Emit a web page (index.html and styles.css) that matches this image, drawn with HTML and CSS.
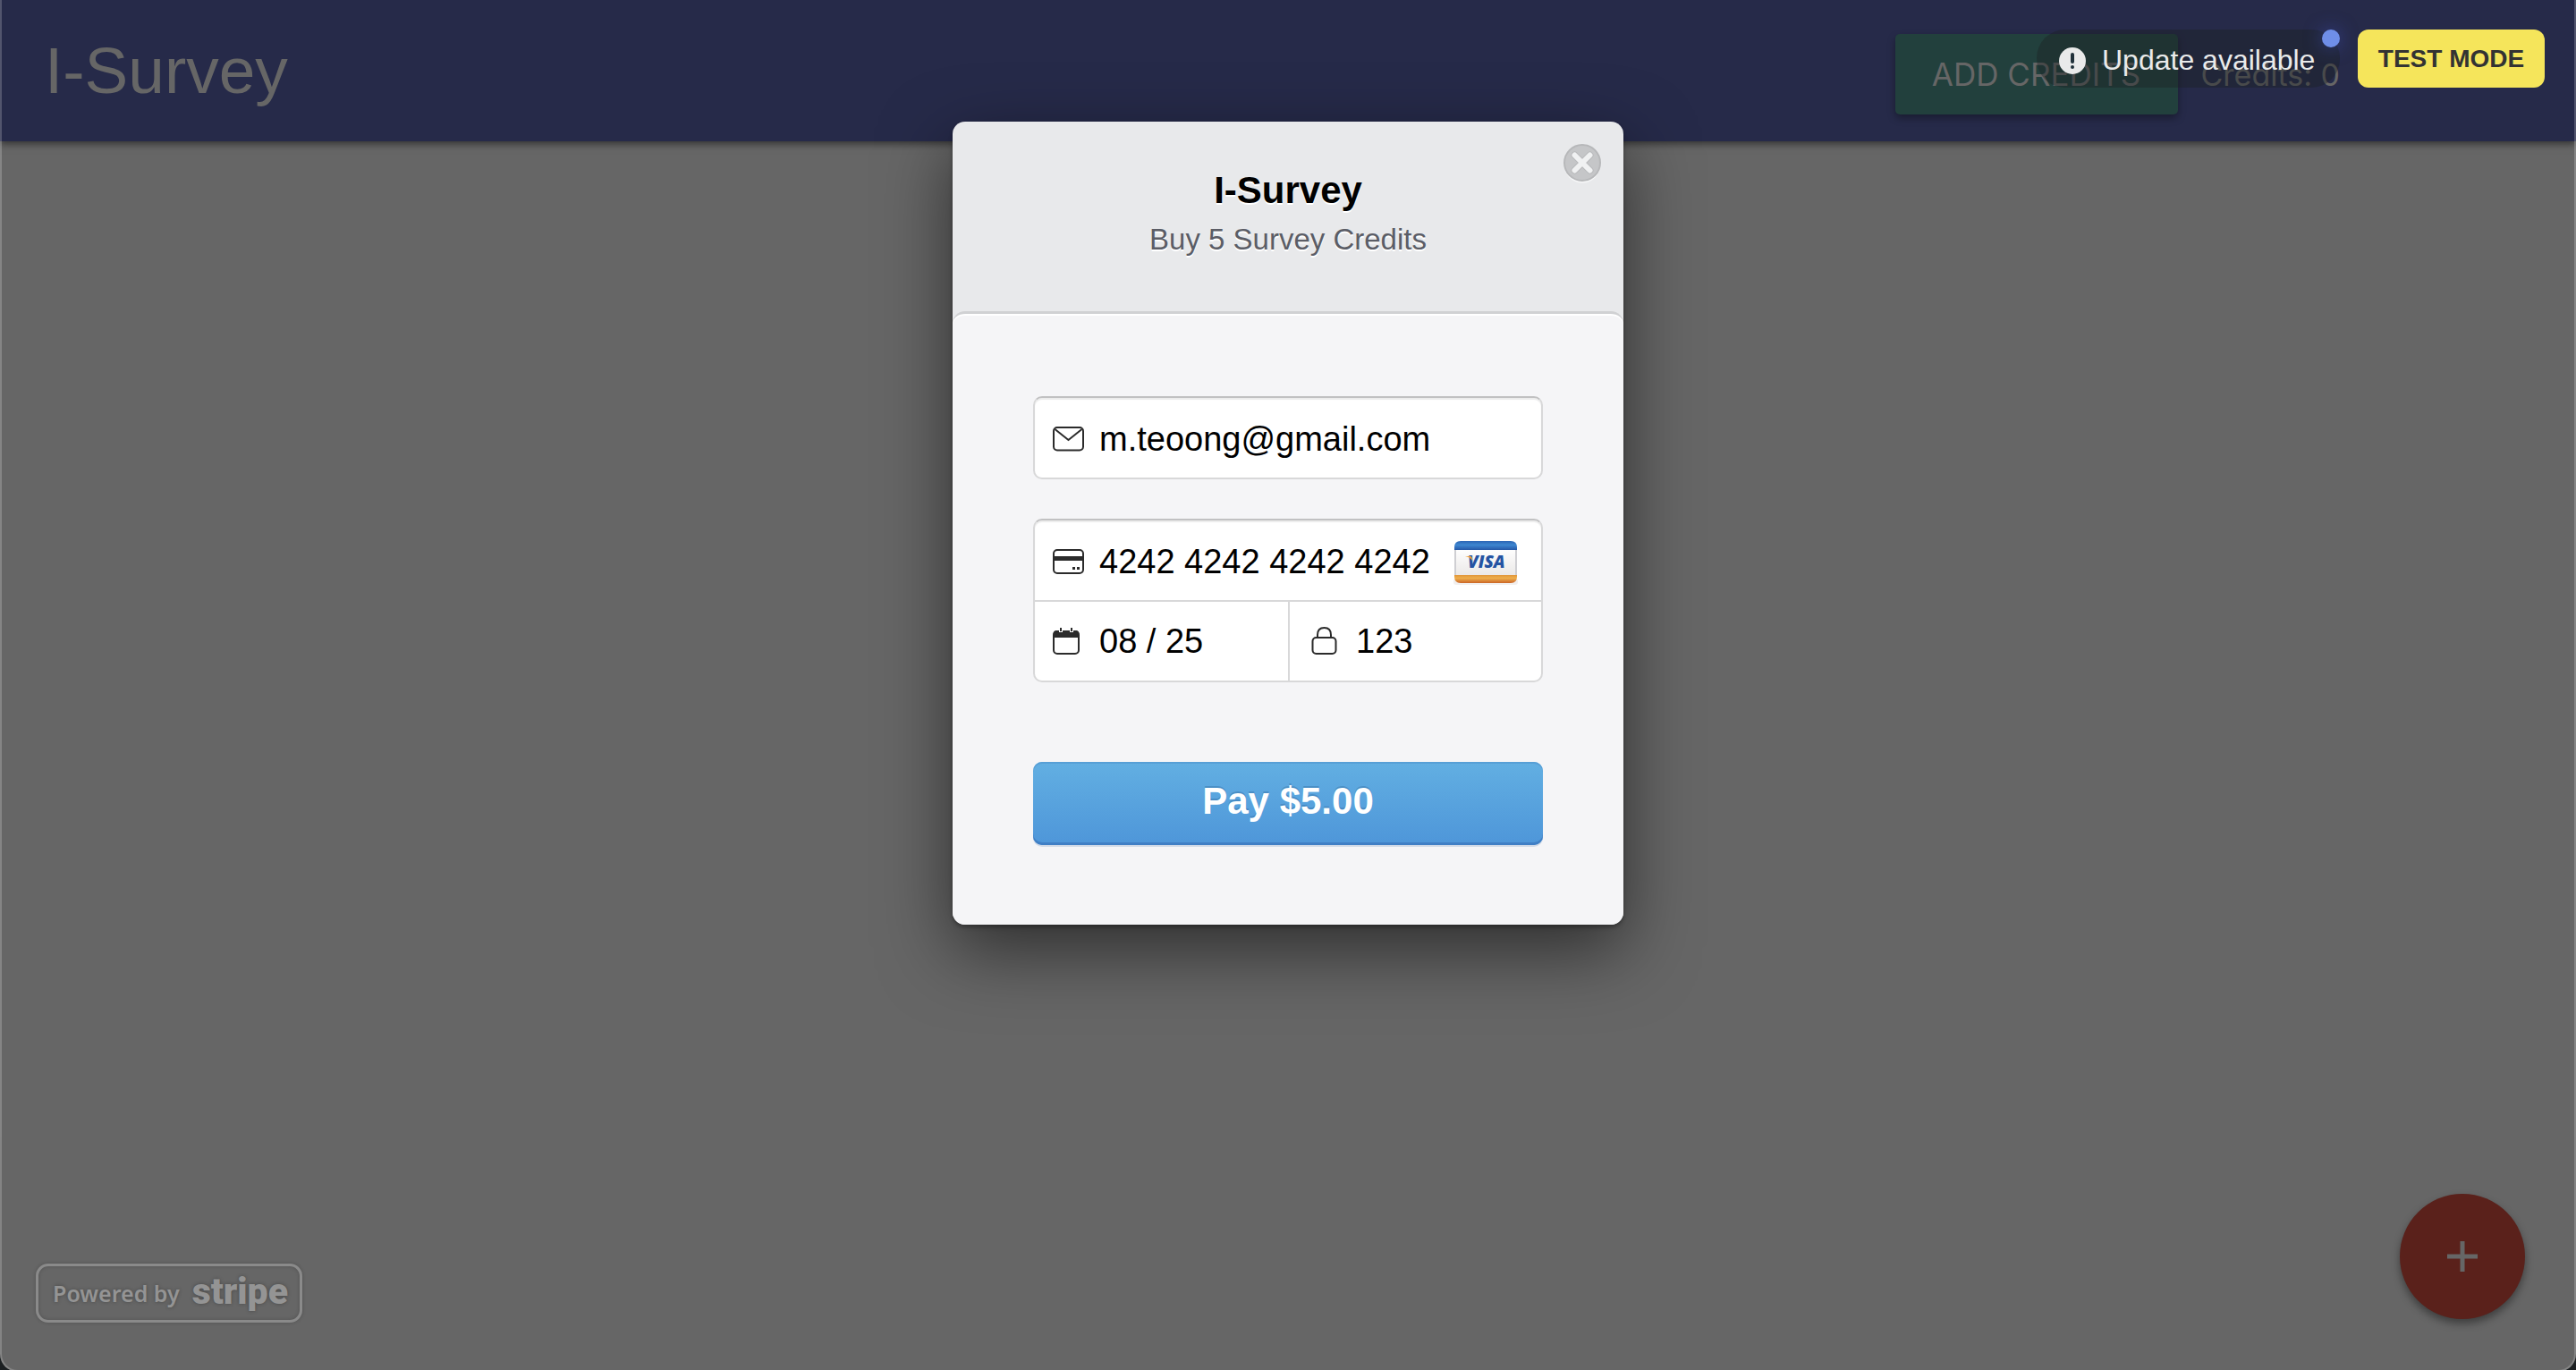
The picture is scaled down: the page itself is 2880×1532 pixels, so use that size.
FILE: index.html
```html
<!DOCTYPE html>
<html lang="en">
<head>
<meta charset="utf-8">
<title>I-Survey</title>
<link rel="stylesheet" href="styles.css">
</head>
<body>
<div class="page">
  <header class="navbar">
    <a class="brand" href="#">I-Survey</a>
    <nav class="nav-actions">
      <button class="add-credits" type="button">ADD CREDITS</button>
      <span class="credits">Credits: 0</span>
    </nav>
  </header>
  <main class="content"></main>
  <footer class="page-footer">
    <a class="powered" href="#"><span class="powered-label">Powered by</span><span class="powered-name">stripe</span></a>
    <button class="fab" type="button" aria-label="New survey">
      <svg width="34" height="34" viewBox="0 0 34 34"><path d="M17 0v34M0 17h34" stroke="currentColor" stroke-width="5"/></svg>
    </button>
  </footer>
</div>

<div class="notices">
  <div class="update">
    <svg class="update-icon" width="30" height="30" viewBox="0 0 30 30"><circle cx="15" cy="15" r="15" fill="#e9eaea"/><path d="M15 8v8" stroke="#20313a" stroke-width="4" stroke-linecap="round"/><circle cx="15" cy="22" r="2" fill="#20313a"/></svg>
    <span>Update available</span>
    <span class="update-dot"></span>
  </div>
  <span class="test-mode">TEST MODE</span>
</div>

<div class="overlay">
  <section class="modal" role="dialog" aria-labelledby="modal-title">
    <div class="modal-header">
      <h1 class="modal-title" id="modal-title">I-Survey</h1>
      <p class="modal-subtitle">Buy 5 Survey Credits</p>
      <button class="close" type="button" aria-label="Close">
        <svg width="42" height="44" viewBox="0 0 42 44"><circle cx="21" cy="23" r="20.500" fill="#f6f7f8"/><circle cx="21" cy="21" r="20" fill="#c5c6c8" stroke="#b7b8ba" stroke-width="2"/><path d="M12.500 12.500l17 17M29.500 12.500l-17 17" stroke="#b9babc" stroke-width="8" stroke-linecap="round"/><path d="M12.500 12.500l17 17M29.500 12.500l-17 17" stroke="#f0f1f2" stroke-width="6" stroke-linecap="round"/></svg>
      </button>
    </div>
    <form class="modal-body">
      <label class="field field-single">
        <svg class="icon" width="36" height="30" viewBox="0 0 36 30" fill="none" stroke="#2b2b2b" stroke-width="2"><rect x="1" y="2" width="33" height="25.500" rx="4"/><path d="M2.500 4l15 12 15-12"/></svg>
        <input type="email" aria-label="Email" value="m.teoong@gmail.com">
      </label>
      <div class="card-group">
        <label class="field">
          <svg class="icon" width="36" height="30" viewBox="0 0 36 30" fill="none" stroke="#2b2b2b" stroke-width="2"><rect x="1" y="2" width="33" height="26" rx="4"/><path d="M1 11.500h33" stroke-width="5"/><path d="M22 22.500h3M27 22.500h3" stroke-width="3"/></svg>
          <input type="text" aria-label="Card number" value="4242 4242 4242 4242">
          <svg class="visa" width="74" height="52" viewBox="0 0 74 52" role="img" aria-label="Visa">
            <defs>
              <linearGradient id="blue" x2="0" y2="1"><stop stop-color="#2c66b5"/><stop offset=".45" stop-color="#3d86d0"/><stop offset="1" stop-color="#2558a8"/></linearGradient>
              <linearGradient id="gold" x2="0" y2="1"><stop stop-color="#e0963a"/><stop offset=".4" stop-color="#eeae4b"/><stop offset="1" stop-color="#cb6527"/></linearGradient>
              <linearGradient id="paper" x2="0" y2="1"><stop stop-color="#fff"/><stop offset="1" stop-color="#ebe9e8"/></linearGradient>
            </defs>
            <rect x="1" y="45" width="72" height="7" rx="3" fill="#f1efee"/>
            <rect x="2" y="10" width="70" height="32" fill="#cfcfd3"/>
            <rect x="4" y="11" width="66" height="30" fill="url(#paper)"/>
            <path d="M2 13v-3q0-7 7-7h56q7 0 7 7v3z" fill="url(#blue)"/>
            <path d="M2 41h70v2q0 7-7 7H9q-7 0-7-7z" fill="url(#gold)"/>
            <text class="visa-text" x="17" y="33">VISA</text>
            <path d="M14 20h6q2 0 2 5-2-4-8-5z" fill="#eaa13d"/>
          </svg>
        </label>
        <div class="card-row">
          <label class="field">
            <svg class="icon" width="36" height="32" viewBox="0 0 36 32" fill="none" stroke="#2b2b2b" stroke-width="2"><rect x="1" y="5" width="28" height="25" rx="4"/><path d="M1.500 11V8q0-3 3-3h21q3 0 3 3v3z" fill="#2b2b2b"/><path d="M9 1v5M21 1v5" stroke="#fff" stroke-width="4"/><path d="M9 1v4M21 1v4"/></svg>
            <input type="text" aria-label="Expiry date" value="08 / 25">
          </label>
          <label class="field field-cvc">
            <svg class="icon" width="30" height="32" viewBox="0 0 30 32" fill="none" stroke="#2b2b2b" stroke-width="2"><rect x="1.500" y="12" width="26" height="18" rx="4"/><path d="M7 12V9q0-8 7.500-8T22 9v3"/></svg>
            <input type="text" aria-label="CVC" value="123">
          </label>
        </div>
      </div>
      <button class="pay" type="button">Pay $5.00</button>
    </form>
  </section>
</div>
<div class="frame"></div>
</body>
</html>
```
FILE: styles.css
```css
* { box-sizing: border-box; }
body {
  margin: 0;
  background: #666;
  font-family: "Liberation Sans", Arial, sans-serif;
}
button { border: 0; padding: 0; font-family: inherit; cursor: pointer; }
a { text-decoration: none; }
svg { display: block; flex: none; }

.page { min-height: 100vh; display: flex; flex-direction: column; }
.navbar {
  display: flex;
  justify-content: space-between;
  align-items: center;
  height: 158px;
  padding: 0 264px 0 50px;
  background: #262a49;
  color: #666;
  box-shadow: 0 3px 8px rgba(0, 0, 0, .5);
  font-family: Inter, sans-serif;
}
.brand {
  color: #666;
  font-family: "Liberation Sans", Arial, sans-serif;
  font-size: 73px;
  line-height: 160px;
}
.nav-actions { display: flex; align-items: center; gap: 26px; padding-top: 8px; }
.add-credits {
  width: 316px;
  height: 90px;
  border-radius: 5px;
  background: #22403d;
  color: #666;
  font-size: 35px;
  box-shadow: 0 4px 8px rgba(0, 0, 0, .35);
}
.credits { font-size: 34px; }
.content { flex: 1; }
.page-footer {
  display: flex;
  justify-content: space-between;
  align-items: flex-end;
  padding: 0 57px 53px 40px;
}
.powered {
  display: flex;
  align-items: center;
  gap: 14px;
  width: 298px;
  height: 66px;
  padding-left: 16px;
  border: 3px solid #8a8a8a;
  border-radius: 14px;
  color: #949494;
  box-shadow: 0 0 4px rgba(0, 0, 0, .2), inset 0 0 4px rgba(0, 0, 0, .2);
  text-shadow: 0 0 4px rgba(0, 0, 0, .3);
}
.powered-label { font: 600 25px/60px "Noto Sans", sans-serif; }
.powered-name { font: 900 41px/56px Roboto, sans-serif; padding-bottom: 4px; }
.fab {
  display: flex;
  align-items: center;
  justify-content: center;
  width: 140px;
  height: 140px;
  margin-bottom: 4px;
  border-radius: 50%;
  background: #5a211b;
  color: #666;
  box-shadow: 0 5px 10px rgba(0, 0, 0, .4);
}

.notices {
  position: absolute;
  top: 33px;
  right: 35px;
  z-index: 3;
  display: flex;
  gap: 20px;
}
.update {
  position: relative;
  display: flex;
  align-items: center;
  gap: 18px;
  width: 339px;
  height: 65px;
  padding: 4px 0 0 25px;
  border-radius: 32px;
  background: rgba(28, 32, 36, .4);
  color: #e9eaea;
  font-size: 32px;
  white-space: nowrap;
}
.update-dot {
  position: absolute;
  top: 0;
  right: 0;
  width: 20px;
  height: 20px;
  border-radius: 50%;
  background: #6f8ee8;
  box-shadow: 0 0 20px rgba(70, 90, 220, .5);
}
.test-mode {
  width: 209px;
  border-radius: 12px;
  background: #f5e55b;
  color: #333;
  font-size: 28px;
  font-weight: 700;
  line-height: 65px;
  text-align: center;
}

.overlay {
  position: absolute;
  inset: 0;
  z-index: 2;
  display: flex;
  justify-content: center;
  align-items: flex-start;
  padding-top: 136px;
}
.modal {
  width: 750px;
  border-radius: 14px;
  background: #e8e9eb;
  box-shadow: 0 3px 4px rgba(0, 0, 0, .3), 0 28px 80px rgba(0, 0, 0, .55);
}
.modal-header { position: relative; height: 212px; padding-top: 52px; text-align: center; }
.modal-title {
  margin: 0;
  font-size: 42px;
  line-height: 50px;
  text-shadow: 0 2px 0 #fff;
}
.modal-subtitle {
  margin: 10px 0 0;
  color: #5b5d66;
  font-size: 33px;
  line-height: 40px;
  text-shadow: 0 2px 0 #fff;
}
.close {
  position: absolute;
  top: 25px;
  right: 25px;
  background: none;
}
.modal-body {
  padding: 92px 90px 89px;
  border-top: 3px solid #d0d1d3;
  border-radius: 14px;
  background: #f5f5f7;
  box-shadow: inset 0 2px 0 #fff;
}
.field {
  display: flex;
  align-items: center;
  flex: 1;
  min-width: 0;
  height: 89px;
  padding: 2px 25px 0 20px;
}
.field-single, .card-group {
  border: 2px solid #d8d8d9;
  border-top-color: #c1c1c2;
  border-radius: 10px;
  background: #fff;
  box-shadow: inset 0 2px 1px #ececec;
}
.field-single { height: 93px; }
.card-group { margin: 44px 0 89px; }
.card-row {
  display: grid;
  grid-template-columns: 1fr 1fr;
  border-top: 2px solid #d8d8d9;
}
.card-row .field { height: 88px; padding-top: 0; }
.card-row .field-cvc { border-left: 2px solid #d8d8d9; padding-left: 24px; }
.field input {
  flex: 1;
  min-width: 0;
  margin-left: 16px;
  padding: 0;
  border: 0;
  outline: 0;
  background: none;
  color: #000;
  font: 38px/44px "Liberation Sans", Arial, sans-serif;
}
.field-cvc input { margin-left: 20px; }
.visa-text { font: italic 800 19px "Open Sans", sans-serif; fill: #2453a2; }
.pay {
  display: block;
  width: 100%;
  height: 93px;
  padding-bottom: 6px;
  border-radius: 10px;
  background: linear-gradient(#62afe2, #4e96d9);
  box-shadow: inset 0 2px 0 #579fd6, inset 0 -3px 0 #407fc5, 0 2px 0 #d3dbe8;
  color: #fff;
  font-size: 42px;
  font-weight: 700;
  text-shadow: 0 -2px 0 rgba(0, 40, 90, .2);
}

.frame {
  position: absolute;
  inset: 0;
  z-index: 4;
  overflow: hidden;
  pointer-events: none;
}
.frame::before {
  content: "";
  display: block;
  height: 100%;
  border: 2px solid rgba(255, 255, 255, .2);
  border-top: 0;
  border-radius: 0 0 20px 20px;
  box-shadow: 0 12px 0 12px #1c2022;
}
```
